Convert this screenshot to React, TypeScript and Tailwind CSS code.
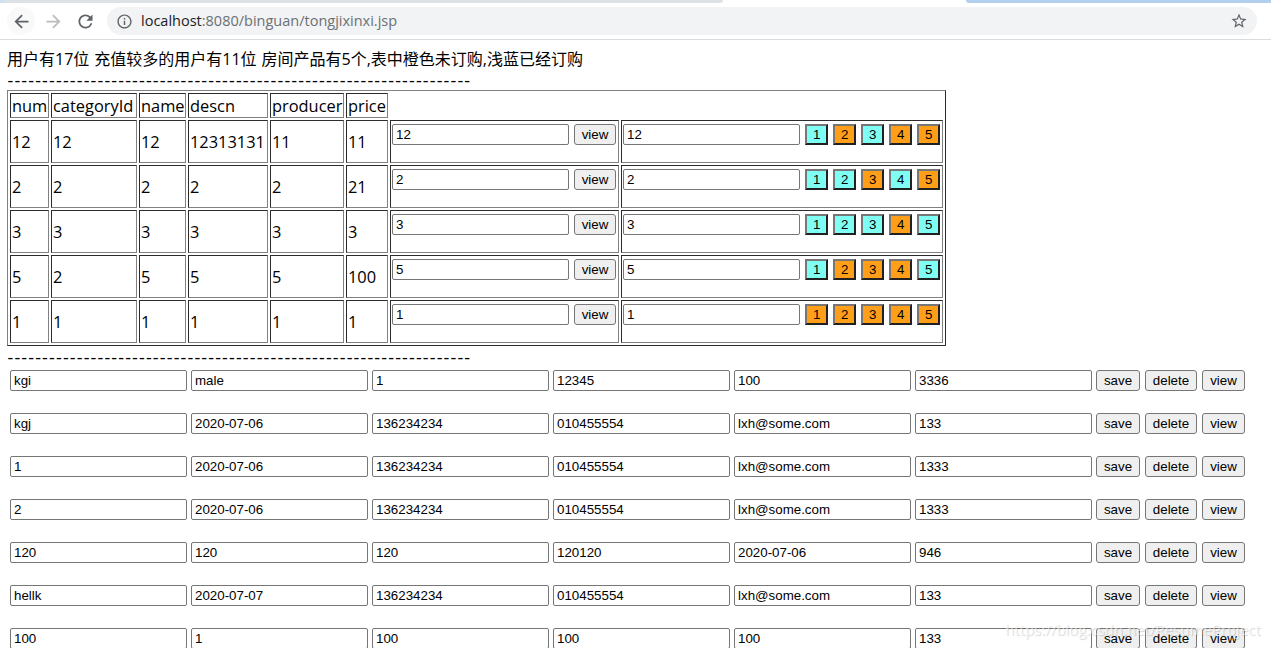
import { MdArrowBack, MdArrowForward, MdInfoOutline, MdRefresh, MdStarBorder } from 'react-icons/md'

interface Room {
  cells: string[]
  id: string
  // true = already booked
  booked: boolean[]
}

const HEADERS = ['num', 'categoryId', 'name', 'descn', 'producer', 'price']

const ROOMS: Room[] = [
  { cells: ['12', '12', '12', '12313131', '11', '11'], id: '12', booked: [true, false, true, false, false] },
  { cells: ['2', '2', '2', '2', '2', '21'],            id: '2',  booked: [true, true, false, true, false] },
  { cells: ['3', '3', '3', '3', '3', '3'],             id: '3',  booked: [true, true, true, false, true] },
  { cells: ['5', '2', '5', '5', '5', '100'],           id: '5',  booked: [true, false, false, false, true] },
  { cells: ['1', '1', '1', '1', '1', '1'],             id: '1',  booked: [false, false, false, false, false] },
]

const USERS = [
  ['kgi', 'male', '1', '12345', '100', '3336'],
  ['kgj', '2020-07-06', '136234234', '010455554', 'lxh@some.com', '133'],
  ['1', '2020-07-06', '136234234', '010455554', 'lxh@some.com', '1333'],
  ['2', '2020-07-06', '136234234', '010455554', 'lxh@some.com', '1333'],
  ['120', '120', '120', '120120', '2020-07-06', '946'],
  ['hellk', '2020-07-07', '136234234', '010455554', 'lxh@some.com', '133'],
  ['100', '1', '100', '100', '100', '133'],
]

const CELL = 'border border-t-[#2c2c2c] border-l-[#2c2c2c] border-b-[#808080] border-r-[#808080] p-px'

function Field({ value }: { value: string }) {
  return (
    <input
      defaultValue={value}
      className="block h-[21px] w-[177px] shrink-0 rounded-[2px] border border-[#767676] bg-white px-[3px] font-['Liberation_Sans',Arial,sans-serif] text-[13.333px] leading-[17px] text-black"
    />
  )
}

function Button({ label, width }: { label: string; width: string }) {
  return (
    <button
      className={`${width} h-[21px] shrink-0 rounded-[3px] border border-[#767676] bg-[#efefef] text-center font-['Liberation_Sans',Arial,sans-serif] text-[13.333px] leading-[19px] text-black`}
    >
      {label}
    </button>
  )
}

function Slot({ n, booked }: { n: number; booked: boolean }) {
  return (
    <button
      className={`${booked ? 'bg-[#7ffff4]' : 'bg-[#ff9f19]'} h-[21px] w-[23.4px] shrink-0 border-2 border-t-[#767676] border-l-[#767676] border-b-[#212121] border-r-[#212121] text-center font-['Liberation_Sans',Arial,sans-serif] text-[13.333px] leading-[17px] text-black`}
    >
      {n}
    </button>
  )
}

function Dashes() {
  return (
    <div className="h-[21px] pl-[0.5px] text-[18px] leading-[21px] tracking-[1.13px] whitespace-nowrap">{'-'.repeat(67)}</div>
  )
}

function Toolbar() {
  return (
    <header className="h-10 border-b border-[#dadce0] bg-white">
      <div className="flex h-[3px] justify-between">
        <div className="w-[723px] rounded-br-[3px] bg-gradient-to-r from-[#c9dff5] from-0% via-[#dee1e6] via-1% to-[#dee1e6]" />
        <div className="w-[305px] rounded-bl-[3px] bg-[#b2cfee]" />
      </div>
      <div className="mt-1 flex h-7 items-center pr-[14px] pl-[7px] text-[#5f6368]">
        <div className="flex size-7 items-center justify-center rounded-full bg-[#f9f9f9]">
          <MdArrowBack size={21} />
        </div>
        <div className="ml-1 flex size-7 items-center justify-center text-[#babcbe]">
          <MdArrowForward size={21} />
        </div>
        <div className="ml-1 flex size-7 items-center justify-center">
          <MdRefresh size={21} />
        </div>
        <div className="ml-2 flex h-7 flex-1 items-center rounded-full bg-[#f1f3f4] pr-[9px] pl-[9px]">
          <MdInfoOutline size={17} />
          <span className="ml-2 text-[14.5px] leading-5 text-[#202124]">
            localhost<span className="text-[#6c7074]">:8080/binguan/tongjixinxi.jsp</span>
          </span>
          <MdStarBorder size={18} className="ml-auto" />
        </div>
      </div>
    </header>
  )
}

function RoomTable() {
  return (
    <table className="w-[939px] table-fixed border-separate border-spacing-[2px] border border-t-[#808080] border-l-[#808080] border-b-[#2c2c2c] border-r-[#2c2c2c] text-[16.4px]">
      <colgroup>
        <col className="w-[39px]" />
        <col className="w-[86px]" />
        <col className="w-[47px]" />
        <col className="w-[80px]" />
        <col className="w-[74px]" />
        <col className="w-[42px]" />
        <col className="w-[229px]" />
        <col className="w-[322px]" />
      </colgroup>
      <tbody>
        <tr className="h-[25px]">
          {HEADERS.map(h => (
            <td key={h} className={`${CELL} leading-[21px] whitespace-nowrap`}>{h}</td>
          ))}
        </tr>
        {ROOMS.map(room => (
          <tr key={room.id} className="h-[43px]">
            {room.cells.map((c, i) => (
              <td key={i} className={`${CELL} align-middle leading-[22px] whitespace-nowrap`}>{c}</td>
            ))}
            <td className={`${CELL} align-top`}>
              <div className="mt-[2px] flex gap-[5px]">
                <Field value={room.id} />
                <Button label="view" width="w-[42px]" />
              </div>
            </td>
            <td className={`${CELL} align-top`}>
              <div className="mt-[2px] flex gap-[5px]">
                <Field value={room.id} />
                <div className="flex gap-[4.6px]">
                  {room.booked.map((b, i) => (
                    <Slot key={i} n={i + 1} booked={b} />
                  ))}
                </div>
              </div>
            </td>
          </tr>
        ))}
      </tbody>
    </table>
  )
}

export default function App() {
  return (
    <div className="relative h-[648px] w-[1271px] overflow-hidden bg-white font-['Open_Sans','Noto_Sans_CJK_SC',sans-serif] text-black">
      <Toolbar />
      <main className="pt-[9px] pl-[7px]">
        <p className="h-[21px] text-[16px] leading-[21px] [word-spacing:0.8px] whitespace-nowrap">
          用户有17位 充值较多的用户有11位 房间产品有5个,表中橙色未订购,浅蓝已经订购
        </p>
        <Dashes />
        <div className="-mt-px mb-px">
          <RoomTable />
        </div>
        <Dashes />

        {/* User records */}
        <div className="mt-[2px] flex flex-col gap-[22px] pl-[3px]">
          {USERS.map((user, i) => (
            <div key={i} className="flex gap-1">
              {user.map((v, j) => (
                <Field key={j} value={v} />
              ))}
              <div className="flex gap-[5px]">
                <Button label="save" width="w-[44px]" />
                <Button label="delete" width="w-[52px]" />
                <Button label="view" width="w-[43px]" />
              </div>
            </div>
          ))}
        </div>
      </main>
      <div className="absolute top-[619px] left-[1005px] text-[15px] leading-5 whitespace-nowrap text-white/60 [text-shadow:1px_1px_1px_rgba(0,0,0,0.16)]">
        https://blog.csdn.net/ResumeProject
      </div>
    </div>
  )
}
